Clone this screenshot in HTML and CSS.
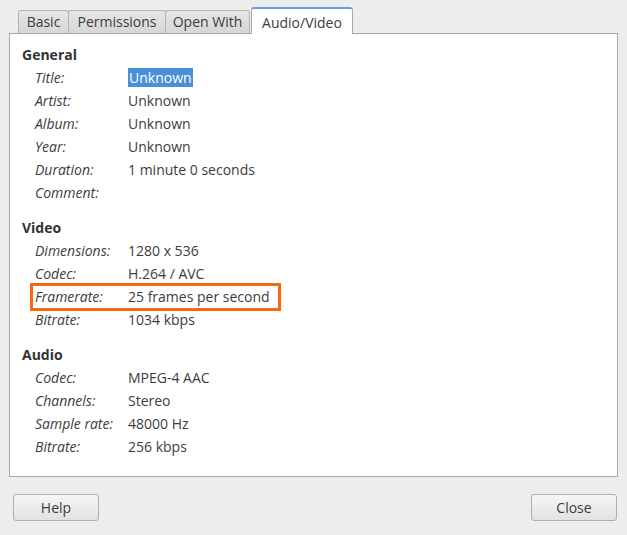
FILE: index.html
```html
<!DOCTYPE html>
<html lang="en">
<head>
    <meta charset="UTF-8">
    <title>Properties</title>
    <link rel="stylesheet" href="styles.css">
</head>
<body>

    <div class="dialog">
        <div class="tabs">
            <div class="tab tab-basic">Basic</div>
            <div class="tab tab-perm">Permissions</div>
            <div class="tab tab-open">Open With</div>
            <div class="tab tab-av active">Audio/Video</div>
        </div>

        <div class="notebook">
            <h3>General</h3>
            <div class="rows">
                <span class="label">Title:</span><span class="value"><span class="selected">Unknown</span></span>
                <span class="label">Artist:</span><span class="value">Unknown</span>
                <span class="label">Album:</span><span class="value">Unknown</span>
                <span class="label">Year:</span><span class="value">Unknown</span>
                <span class="label">Duration:</span><span class="value">1 minute 0 seconds</span>
                <span class="label">Comment:</span><span class="value"></span>
            </div>

            <h3>Video</h3>
            <div class="rows">
                <span class="label">Dimensions:</span><span class="value">1280 x 536</span>
                <span class="label">Codec:</span><span class="value">H.264 / AVC</span>
                <span class="label mark">Framerate:</span><span class="value">25 frames per second</span>
                <span class="label">Bitrate:</span><span class="value">1034 kbps</span>
            </div>

            <h3>Audio</h3>
            <div class="rows">
                <span class="label">Codec:</span><span class="value">MPEG-4 AAC</span>
                <span class="label">Channels:</span><span class="value">Stereo</span>
                <span class="label">Sample rate:</span><span class="value">48000 Hz</span>
                <span class="label">Bitrate:</span><span class="value">256 kbps</span>
            </div>
        </div>

        <div class="buttons">
            <button>Help</button>
            <button>Close</button>
        </div>
    </div>

</body>
</html>
```

FILE: styles.css
```css
* { margin: 0; padding: 0; box-sizing: border-box; }
body { background: #ededed; font-family: "Open Sans", "DejaVu Sans", sans-serif; font-size: 13px; color: #3c3c3c; }

.dialog { width: 627px; height: 535px; padding: 6px 9px 0 9px; }

/* Tabs */
.tabs { display: flex; align-items: flex-end; height: 27px; padding-left: 9px; }
.tab {
    height: 23px;
    line-height: 22px;
    text-align: center;
    font-size: 14px;
    border: 1px solid #b4b4b4;
    border-bottom: none;
    border-radius: 3px 3px 0 0;
    background: linear-gradient(#e6e6e6, #d6d6d6);
    color: #3c3c3c;
}
.tab + .tab { margin-left: -1px; }
.tab-basic { width: 51px; }
.tab-perm { width: 98px; }
.tab-open { width: 85px; }
.tab-av { width: 102px; }
.tab.active {
    height: 27px;
    line-height: 27px;
    margin-left: 1px;
    background: #fff;
    border-color: #a8a8a8;
    border-top: 2px solid #6a9fd6;
    position: relative;
    top: 1px;
}

/* Page */
.notebook {
    height: 444px;
    background: #fff;
    border: 1px solid #a8a8a8;
    padding: 11px 12px 0 12px;
}
.notebook h3 { font-size: 14px; font-weight: bold; color: #333; height: 20px; line-height: 20px; }
.notebook h3 + .rows { margin-bottom: 14px; }

.rows { display: grid; grid-template-columns: 93px auto; grid-auto-rows: 23px; align-items: center; padding-left: 13px; padding-top: 1px; }
.label { font-style: italic; font-size: 14px; }
.value { font-size: 14px; }
.selected { background: #4a90d9; color: #fff; padding: 0 1px; }

/* Highlighted row */
.mark { position: relative; }
.mark::after {
    content: "";
    position: absolute;
    left: -5px;
    top: -4px;
    width: 251px;
    height: 28px;
    box-sizing: border-box;
    border: 3px solid #f7680f;
}

/* Buttons */
.buttons { display: flex; justify-content: space-between; padding: 17px 1px 0 4px; }
.buttons button {
    width: 86px;
    height: 27px;
    font-family: inherit;
    font-size: 14px;
    color: #3c3c3c;
    border: 1px solid #b0b0b0;
    border-radius: 3px;
    background: linear-gradient(#f6f6f6, #e2e2e2);
}
```
